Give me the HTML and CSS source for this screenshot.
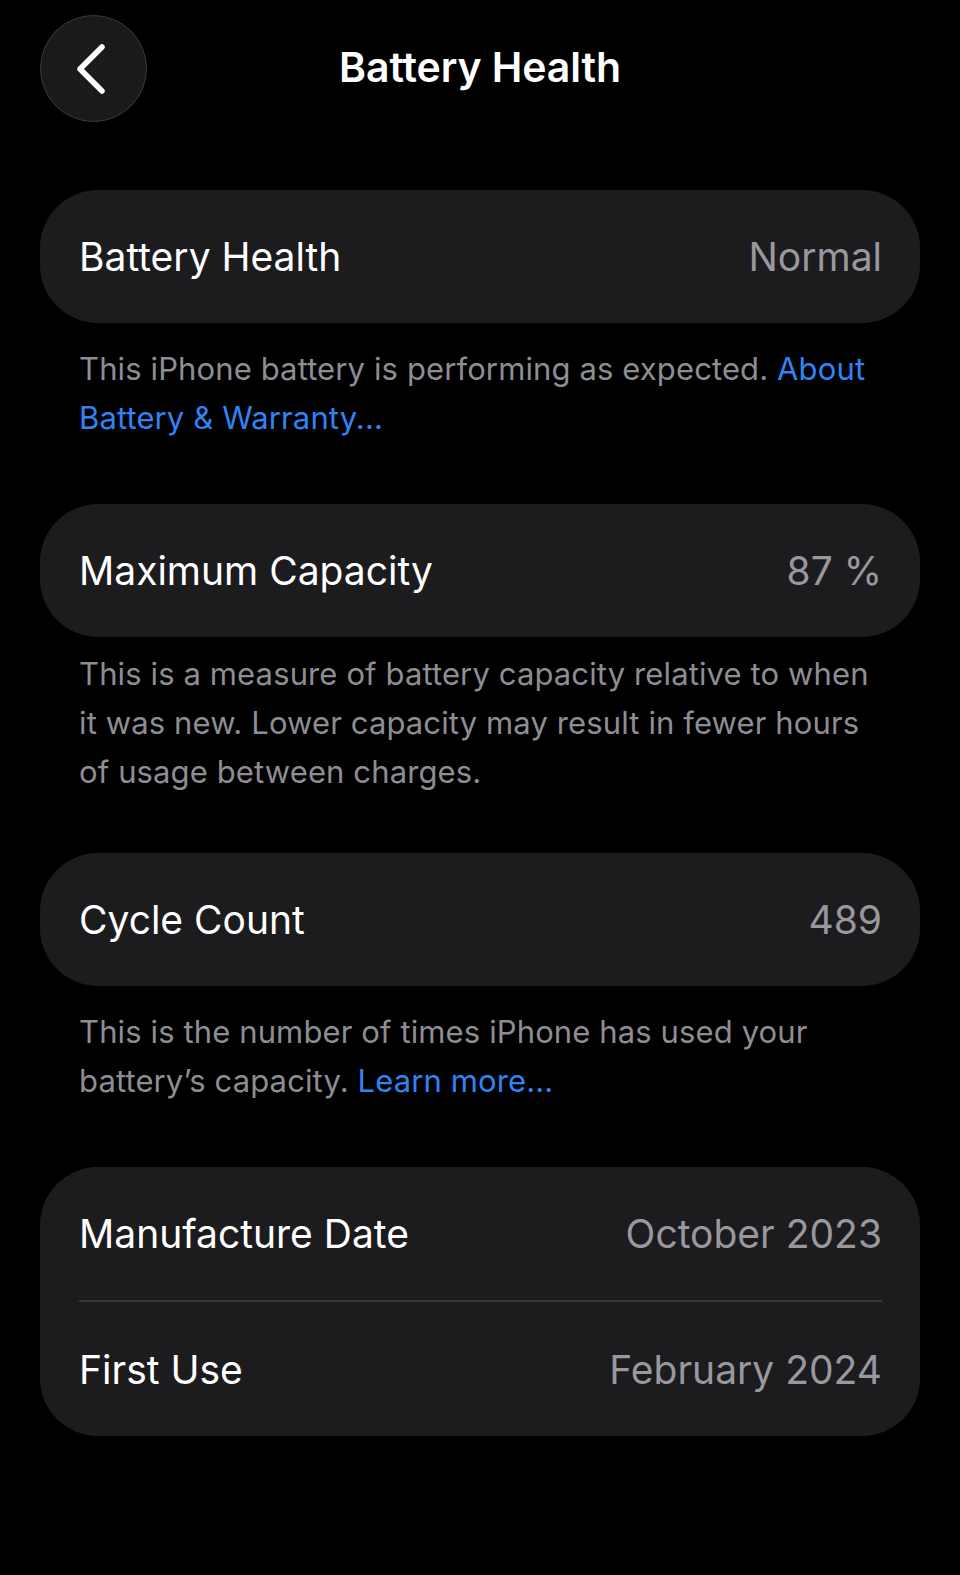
FILE: index.html
```html
<!DOCTYPE html>
<html lang="en">
<head>
    <meta charset="UTF-8">
    <meta name="viewport" content="width=device-width, initial-scale=1.0">
    <title>Battery Health</title>
    <link rel="stylesheet" href="styles.css">
</head>
<body>
    <header class="nav-bar">
        <button class="back-btn" aria-label="Back">
            <svg width="40" height="54" viewBox="0 0 40 54">
                <path d="M31 5 L9 27 L31 49" fill="none" stroke="#fff" stroke-width="5.5" stroke-linecap="round" stroke-linejoin="round"/>
            </svg>
        </button>
        <h1 class="nav-title">Battery Health</h1>
        <div></div>
    </header>

    <main class="content">
        <section class="group">
            <div class="row">
                <span class="row-label">Battery Health</span>
                <span class="row-value">Normal</span>
            </div>
        </section>
        <p class="note">This iPhone battery is performing as expected. <a href="#">About Battery &amp; Warranty...</a></p>

        <section class="group">
            <div class="row">
                <span class="row-label">Maximum Capacity</span>
                <span class="row-value">87 %</span>
            </div>
        </section>
        <p class="note note-tight">This is a measure of battery capacity relative to when it was new. Lower capacity may result in fewer hours of usage between charges.</p>

        <section class="group">
            <div class="row">
                <span class="row-label">Cycle Count</span>
                <span class="row-value">489</span>
            </div>
        </section>
        <p class="note">This is the number of times iPhone has used your battery’s capacity. <a href="#">Learn more...</a></p>

        <section class="group">
            <div class="row">
                <span class="row-label">Manufacture Date</span>
                <span class="row-value">October 2023</span>
            </div>
            <div class="row">
                <span class="row-label">First Use</span>
                <span class="row-value">February 2024</span>
            </div>
        </section>
    </main>
</body>
</html>
```

FILE: styles.css
```css
body {
    font-family: Inter, "Noto Sans", sans-serif;
    margin: 0;
    padding: 0;
    background-color: #000;
    color: #fff;
}
.nav-bar {
    display: grid;
    grid-template-columns: 107px 1fr 107px;
    align-items: center;
    padding: 15px 40px 0;
}
.back-btn {
    width: 107px;
    height: 107px;
    border-radius: 50%;
    background-color: #1a1a1b;
    border: 1.5px solid #3a3a3c;
    display: flex;
    align-items: center;
    justify-content: center;
    padding: 0 6px 0 0;
    cursor: pointer;
}
.nav-title {
    margin: 0 0 4px;
    text-align: center;
    font-size: 41px;
    font-weight: 600;
    letter-spacing: -0.1px;
}
.content {
    padding: 68px 40px 0;
}
.group {
    background-color: #1c1c1e;
    border-radius: 58px;
    padding: 0 38px 0 39px;
}
.row {
    display: flex;
    align-items: center;
    justify-content: space-between;
    height: 133px;
    font-size: 39px;
}
.row + .row {
    height: 134px;
    border-top: 2px solid #38383a;
}
.row-label {
    color: #fff;
}
.row-value {
    color: #98989e;
}
.note {
    margin: 21px 0 62px;
    padding: 0 40px 0 39px;
    font-size: 31px;
    line-height: 49px;
    letter-spacing: 0.12px;
    color: #8d8d93;
}
.note-tight {
    margin-top: 12px;
    margin-bottom: 57px;
}
.note a {
    color: #2f84f5;
    text-decoration: none;
}
```
